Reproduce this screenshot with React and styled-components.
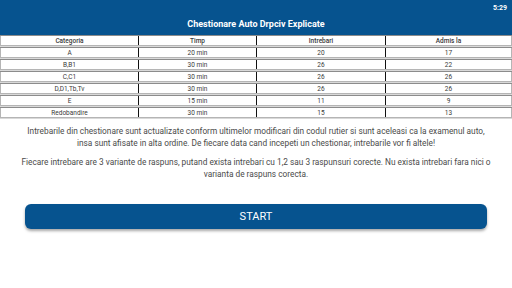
import React from 'react'
import styled, { createGlobalStyle } from 'styled-components'

const Global = createGlobalStyle`
  html, body {
    margin: 0;
    padding: 0;
    background: #fff;
    font-family: Roboto, "Liberation Sans", sans-serif;
  }
`

const Page = styled.div`
  width: 512px;
  height: 288px;
  display: flex;
  flex-direction: column;
  overflow: hidden;
`

const Header = styled.div`
  background-color: #06538f;
  height: 35px;
  display: flex;
  flex-direction: column;
  color: #fff;
`

const StatusBar = styled.div`
  height: 13px;
  display: flex;
  justify-content: flex-end;
  align-items: center;
  padding-right: 5px;
  padding-top: 1px;
  font-size: 7px;
  font-weight: 700;
`

const Title = styled.h1`
  margin: 0;
  flex: 1;
  display: flex;
  align-items: center;
  justify-content: center;
  font-size: 9px;
  font-weight: 700;
  padding-bottom: 2px;
`

const Table = styled.div`
  display: flex;
  flex-direction: column;
  background: #d9d9d9;
  gap: 1px;
  padding-bottom: 1px;
`

const Row = styled.div`
  display: grid;
  grid-template-columns: 138px 118px 129px 1fr;
  height: 9px;
  background: #fff;
  border-top: 1px solid #8c8c8c;
  border-bottom: 1px solid #b5b5b5;
`

const Cell = styled.div`
  display: flex;
  align-items: center;
  justify-content: center;
  font-size: 6.5px;
  color: #3a3a3a;
  font-weight: ${props => props.head ? 500 : 400};
  border-left: ${props => props.first ? '1px solid #b5b5b5' : '1px solid #111'};
  &:last-child {
    border-right: 1px solid #b5b5b5;
  }
`

const Info = styled.div`
  padding: 6px 8px 0;
  display: flex;
  flex-direction: column;
  gap: 7px;
`

const Paragraph = styled.p`
  margin: 0;
  text-align: center;
  font-size: 8.3px;
  line-height: 12px;
  color: #4a4a4a;
`

const StartButton = styled.button`
  margin: 24px 25px 0;
  height: 25px;
  border: none;
  border-radius: 6px;
  background: #06538f;
  color: #fff;
  font-family: Roboto, "Liberation Sans", sans-serif;
  font-size: 11px;
  box-shadow: 0 2px 3px rgba(0, 0, 0, 0.35);
`

const rows = [
  ['A', '20 min', '20', '17'],
  ['B,B1', '30 min', '26', '22'],
  ['C,C1', '30 min', '26', '26'],
  ['D,D1,Tb,Tv', '30 min', '26', '26'],
  ['E', '15 min', '11', '9'],
  ['Redobandire', '30 min', '15', '13'],
]

const App = () => (
  <Page>
    <Global />
    <Header>
      <StatusBar>5:29</StatusBar>
      <Title>Chestionare Auto Drpciv Explicate</Title>
    </Header>
    <Table>
      <Row>
        {['Categoria', 'Timp', 'Intrebari', 'Admis la'].map((t, i) => (
          <Cell key={t} head first={i === 0}>{t}</Cell>
        ))}
      </Row>
      {rows.map(r => (
        <Row key={r[0]}>
          {r.map((t, i) => (
            <Cell key={i} first={i === 0}>{t}</Cell>
          ))}
        </Row>
      ))}
    </Table>
    <Info>
      <Paragraph>
        Intrebarile din chestionare sunt actualizate conform ultimelor modificari din codul rutier si sunt aceleasi ca la examenul auto,<br />
        insa sunt afisate in alta ordine. De fiecare data cand incepeti un chestionar, intrebarile vor fi altele!
      </Paragraph>
      <Paragraph>
        Fiecare intrebare are 3 variante de raspuns, putand exista intrebari cu 1,2 sau 3 raspunsuri corecte. Nu exista intrebari fara nici o<br />
        varianta de raspuns corecta.
      </Paragraph>
    </Info>
    <StartButton>START</StartButton>
  </Page>
)

export default App
